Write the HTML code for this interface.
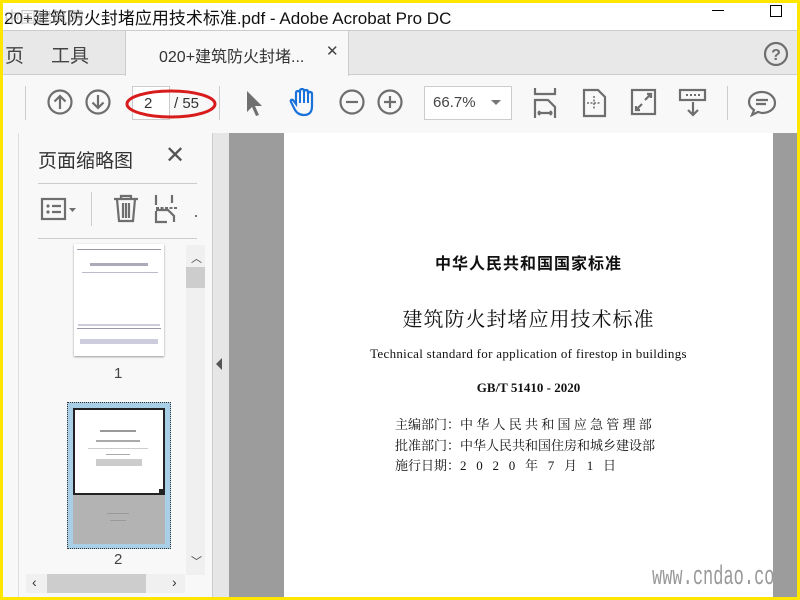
<!DOCTYPE html>
<html><head><meta charset="utf-8"><style>
*{margin:0;padding:0;box-sizing:border-box}
body{width:800px;height:600px;overflow:hidden;background:#ffe600;font-family:"Liberation Sans","Noto Sans CJK SC",sans-serif;position:relative}
.a{position:absolute}
svg{position:absolute;overflow:visible}
.ic{fill:none;stroke:#6e6e6e;stroke-width:2.2}
</style></head><body>
<!-- title bar -->
<div class="a" style="left:3px;top:3px;width:794px;height:28px;background:#fff"></div>
<div class="a" style="left:4px;top:4px;font-size:17px;color:#111;white-space:nowrap">20+建筑防火封堵应用技术标准.pdf - Adobe Acrobat Pro DC</div>
<div class="a" style="left:4px;top:4px;font-size:16px;color:rgba(150,150,150,0.5);white-space:nowrap">中国建筑网</div>
<div class="a" style="left:712px;top:10px;width:12px;height:1px;background:#000"></div>
<div class="a" style="left:770px;top:5px;width:12px;height:12px;border:1px solid #000"></div>
<!-- tab bar -->
<div class="a" style="left:3px;top:30px;width:794px;height:46px;background:#e8e8e8;border-top:1px solid #ccc;border-bottom:1px solid #ccc"></div>
<div class="a" style="left:5px;top:41px;font-size:19px;color:#444">页</div>
<div class="a" style="left:51px;top:41px;font-size:19px;color:#444">工具</div>
<!-- toolbar -->
<div class="a" style="left:3px;top:74px;width:794px;height:60px;background:#f8f8f8;border-top:1px solid #ccc;border-bottom:1px solid #ddd"></div>
<div class="a" style="left:125px;top:31px;width:224px;height:45px;background:#f8f8f8;border-left:1px solid #ccc;border-right:1px solid #ccc"></div>
<div class="a" style="left:159px;top:43px;font-size:16px;color:#333">020+建筑防火封堵...</div>
<div class="a" style="left:326px;top:42px;font-size:15px;color:#444">✕</div>
<svg style="left:763px;top:41px" width="26" height="26"><circle cx="13" cy="13" r="11" class="ic"/><text x="13" y="19" text-anchor="middle" font-size="16" font-weight="bold" fill="#6e6e6e" font-family="Liberation Sans">?</text></svg>
<div class="a" style="left:25px;top:86px;width:1px;height:34px;background:#ccc"></div>
<svg style="left:47px;top:89px" width="28" height="28"><circle cx="13" cy="13" r="11.5" class="ic"/><path d="M13 20V7M7.5 12.5 13 7l5.5 5.5" class="ic"/></svg>
<svg style="left:85px;top:89px" width="28" height="28"><circle cx="13" cy="13" r="11.5" class="ic"/><path d="M13 6v13M7.5 13.5 13 19l5.5-5.5" class="ic"/></svg>
<div class="a" style="left:132px;top:86px;width:38px;height:34px;border:1px solid #ccc;background:#fff"></div>
<div class="a" style="left:144px;top:95px;font-size:15px;color:#333">2</div>
<div class="a" style="left:174px;top:95px;font-size:15px;color:#333">/ 55</div>
<svg style="left:125px;top:88px" width="95" height="34"><ellipse cx="46" cy="16" rx="44" ry="13" fill="none" stroke="#d81c1c" stroke-width="3"/></svg>
<div class="a" style="left:219px;top:86px;width:1px;height:34px;background:#ccc"></div>
<svg style="left:245px;top:90px" width="20" height="28"><path d="M2 1 L2 22 L7 17 L11 26 L14 25 L10 16 L17 16 Z" fill="#707070"/></svg>
<svg style="left:287px;top:88px" width="32" height="32"><path d="M8 22 L4 14 Q3 11 6 12 L9 16 V5 Q9 3 11 3 Q13 3 13 5 V3 Q13 1 15 1 Q17 1 17 3 V4 Q17 2 19 2 Q21 2 21 4 V6 Q21 4 23 4 Q25 4 25 6 V18 Q25 27 17 27 Q11 27 8 22 Z" fill="none" stroke="#1a73d9" stroke-width="2.2"/><path d="M13 5v10M17 3v12M21 5v10" stroke="#1a73d9" stroke-width="2"/></svg>
<svg style="left:339px;top:89px" width="28" height="28"><circle cx="13" cy="13" r="11.5" class="ic"/><path d="M7 13h12" class="ic"/></svg>
<svg style="left:377px;top:89px" width="28" height="28"><circle cx="13" cy="13" r="11.5" class="ic"/><path d="M7 13h12M13 7v12" class="ic"/></svg>
<div class="a" style="left:424px;top:86px;width:88px;height:34px;border:1px solid #ccc;background:#fff"></div>
<div class="a" style="left:433px;top:94px;font-size:15px;color:#444">66.7%</div>
<div class="a" style="left:491px;top:100px;width:0;height:0;border-left:5px solid transparent;border-right:5px solid transparent;border-top:5px solid #777"></div>
<svg style="left:533px;top:88px" width="26" height="32"><path d="M2 0v6h20V0M2 30V12h13l7 7v11M5 25h14M5 25l2-2M5 25l2 2M19 25l-2-2M19 25l-2 2" class="ic"/></svg>
<svg style="left:583px;top:89px" width="24" height="28"><path d="M1 1h14l7 7v19H1Z" class="ic"/><path d="M11 7v14M4 14h14" stroke="#6e6e6e" stroke-width="1.5" stroke-dasharray="2 1.5"/></svg>
<svg style="left:631px;top:89px" width="26" height="27"><rect x="1" y="1" width="23" height="24" class="ic"/><path d="M14 11l6-6M16 5h4v4M11 15l-6 6M5 17v4h4" class="ic"/></svg>
<svg style="left:679px;top:89px" width="28" height="30"><rect x="1" y="1" width="25" height="10" class="ic"/><path d="M14 13v13M9 21l5 5 5-5" class="ic"/><path d="M7 6h14" stroke="#6e6e6e" stroke-width="2" stroke-dasharray="2 2"/></svg>
<div class="a" style="left:727px;top:86px;width:1px;height:34px;background:#ccc"></div>
<svg style="left:747px;top:90px" width="30" height="28"><path d="M15 2C8 2 2 6 2 12c0 3 2 6 5 8l-2 5 6-3c1 0 3 1 4 1 7 0 13-4 13-10S22 2 15 2Z" class="ic"/><path d="M9 10h12M9 14h10" class="ic" stroke-width="1.6"/></svg>
<!-- left panel -->
<div class="a" style="left:3px;top:133px;width:16px;height:464px;background:#f8f8f8;border-right:1px solid #ddd"></div>
<div class="a" style="left:19px;top:133px;width:193px;height:464px;background:#f8f8f8"></div>
<div class="a" style="left:38px;top:146px;font-size:19px;color:#333">页面缩略图</div>
<div class="a" style="left:165px;top:141px;font-size:24px;color:#555">✕</div>
<div class="a" style="left:38px;top:183px;width:159px;height:1px;background:#ccc"></div>
<div class="a" style="left:38px;top:238px;width:159px;height:1px;background:#ccc"></div>
<svg style="left:41px;top:198px" width="38" height="24"><rect x="1" y="1" width="23" height="20" class="ic"/><circle cx="7" cy="8" r="1.6" fill="#6e6e6e"/><circle cx="7" cy="14" r="1.6" fill="#6e6e6e"/><path d="M11 8h9M11 14h9" class="ic"/><path d="M28 10h7l-3.5 4Z" fill="#6e6e6e"/></svg>
<div class="a" style="left:91px;top:192px;width:1px;height:34px;background:#ccc"></div>
<svg style="left:112px;top:194px" width="28" height="30"><path d="M2 5h24M9 5V2h10v3M5 5l2 22h14l2-22M11 9v15M14 9v15M17 9v15" class="ic"/></svg>
<svg style="left:154px;top:195px" width="26" height="28"><path d="M2 0v10M2 16v11h11M20 27V21l-6-6H2M18 0v8" class="ic"/><path d="M2 13h22" stroke="#6e6e6e" stroke-width="2" stroke-dasharray="3 1.5"/></svg>
<div class="a" style="left:195px;top:215px;width:2px;height:2px;background:#777"></div>
<!-- thumb 1 -->
<div class="a" style="left:74px;top:244px;width:90px;height:112px;background:#fff;box-shadow:0 1px 2px #999"></div>
<div class="a" style="left:77px;top:249px;width:84px;height:1px;background:#99a"></div>
<div class="a" style="left:90px;top:263px;width:58px;height:3px;background:#aab"></div>
<div class="a" style="left:82px;top:272px;width:76px;height:1px;background:#bbc"></div>
<div class="a" style="left:78px;top:324px;width:82px;height:2px;background:#ccd"></div>
<div class="a" style="left:77px;top:328px;width:84px;height:1px;background:#99a"></div>
<div class="a" style="left:80px;top:339px;width:78px;height:5px;background:#ccd"></div>
<div class="a" style="left:114px;top:365px;font-size:15px;color:#444">1</div>
<!-- thumb 2 -->
<div class="a" style="left:67px;top:402px;width:104px;height:147px;background:#a8cfe6;border:1px dotted #333"></div>
<div class="a" style="left:73px;top:408px;width:92px;height:136px;background:#b3b3b3"></div>
<div class="a" style="left:73px;top:408px;width:92px;height:87px;background:#fff;border:2px solid #222"></div>
<div class="a" style="left:159px;top:489px;width:6px;height:6px;background:#222"></div>
<div class="a" style="left:100px;top:430px;width:36px;height:2px;background:#999"></div>
<div class="a" style="left:96px;top:440px;width:44px;height:2px;background:#aaa"></div>
<div class="a" style="left:88px;top:448px;width:60px;height:1px;background:#ccc"></div>
<div class="a" style="left:106px;top:454px;width:24px;height:1px;background:#aaa"></div>
<div class="a" style="left:96px;top:459px;width:46px;height:7px;background:#ccc"></div>
<div class="a" style="left:107px;top:513px;width:22px;height:1px;background:#999"></div>
<div class="a" style="left:110px;top:520px;width:16px;height:1px;background:#999"></div>
<div class="a" style="left:114px;top:551px;font-size:15px;color:#444">2</div>
<!-- vscroll -->
<div class="a" style="left:186px;top:245px;width:19px;height:330px;background:#f0f0f0"></div>
<div class="a" style="left:191px;top:250px;font-size:11px;color:#444">︿</div>
<div class="a" style="left:186px;top:267px;width:19px;height:21px;background:#cdcdcd"></div>
<div class="a" style="left:191px;top:553px;font-size:11px;color:#444">﹀</div>
<!-- hscroll -->
<div class="a" style="left:26px;top:574px;width:159px;height:19px;background:#f0f0f0"></div>
<div class="a" style="left:47px;top:574px;width:99px;height:19px;background:#cdcdcd"></div>
<div class="a" style="left:32px;top:574px;font-size:14px;color:#333">‹</div>
<div class="a" style="left:172px;top:574px;font-size:14px;color:#333">›</div>
<!-- splitter -->
<div class="a" style="left:212px;top:133px;width:17px;height:464px;background:#e6e6e6;border-left:1px solid #ccc"></div>
<div class="a" style="left:216px;top:358px;width:0;height:0;border-top:6px solid transparent;border-bottom:6px solid transparent;border-right:6px solid #555"></div>
<!-- doc area -->
<div class="a" style="left:229px;top:133px;width:568px;height:464px;background:#9c9c9c"></div>
<div class="a" style="left:284px;top:133px;width:489px;height:464px;background:#fff"></div>
<div style="position:absolute;left:284px;top:0;width:489px;font-family:'Liberation Serif','Noto Serif CJK SC',serif;color:#111;text-align:center">
<div class="a" style="left:0;width:489px;top:250px;font-size:16px;font-weight:bold;font-family:'Liberation Sans','Noto Sans CJK SC',sans-serif;letter-spacing:1px">中华人民共和国国家标准</div>
<div class="a" style="left:0;width:489px;top:303px;font-size:20px;letter-spacing:1px">建筑防火封堵应用技术标准</div>
<div class="a" style="left:0;width:489px;top:346px;font-size:13px;letter-spacing:.3px">Technical standard for application of firestop in buildings</div>
<div class="a" style="left:0;width:489px;top:380px;font-size:13px;font-weight:bold">GB/T 51410 - 2020</div>
<div class="a" style="left:111px;top:415px;font-size:13px;text-align:left;line-height:20.5px;white-space:nowrap">主编部门：中&nbsp;华&nbsp;人&nbsp;民&nbsp;共&nbsp;和&nbsp;国&nbsp;应&nbsp;急&nbsp;管&nbsp;理&nbsp;部<br>批准部门：中华人民共和国住房和城乡建设部<br>施行日期：2&nbsp;&nbsp;&nbsp;0&nbsp;&nbsp;&nbsp;2&nbsp;&nbsp;&nbsp;0&nbsp;&nbsp;&nbsp;年&nbsp;&nbsp;&nbsp;7&nbsp;&nbsp;&nbsp;月&nbsp;&nbsp;&nbsp;1&nbsp;&nbsp;&nbsp;日</div>
</div>
<div class="a" style="left:652px;top:562px;width:121px;height:32px;overflow:hidden">
<div style="font-size:27px;line-height:32px;color:#999;font-family:'Liberation Mono',monospace;white-space:nowrap;transform:scaleX(0.63);transform-origin:left">www.cndao.com</div>
</div>
</body></html>
